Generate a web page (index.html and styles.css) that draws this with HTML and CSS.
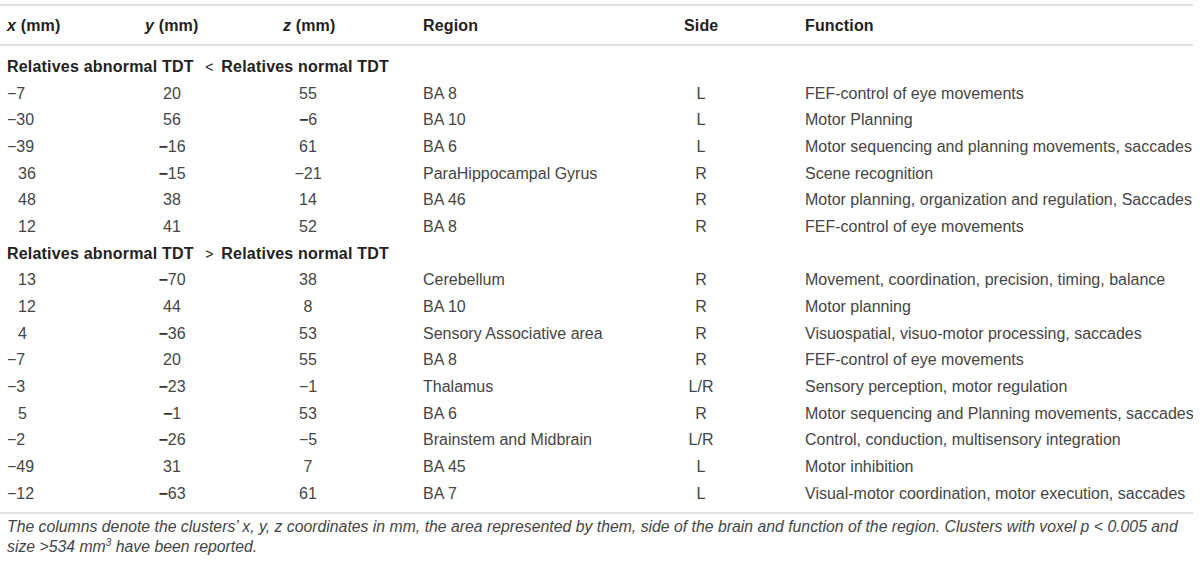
FILE: index.html
```html
<!DOCTYPE html>
<html lang="en">
<head>
<meta charset="utf-8">
<title>Clusters table</title>
<link rel="stylesheet" href="styles.css">
</head>
<body>
<table class="data">
  <colgroup>
    <col class="c1"><col class="c2"><col class="c3"><col class="c4"><col class="c5"><col class="c6">
  </colgroup>
  <thead>
    <tr>
      <th><i>x</i> (mm)</th>
      <th><i>y</i> (mm)</th>
      <th><i>z</i> (mm)</th>
      <th>Region</th>
      <th>Side</th>
      <th>Function</th>
    </tr>
  </thead>
  <tbody>
    <tr class="group first"><td colspan="6">Relatives abnormal TDT <span class="op">&lt;</span> Relatives normal TDT</td></tr>
    <tr><td>&minus;7</td><td><span class="cy">20</span></td><td><span class="cz">55</span></td><td>BA 8</td><td><span class="cs">L</span></td><td>FEF-control of eye movements</td></tr>
    <tr><td>&minus;30</td><td><span class="cy">56</span></td><td><span class="cz"><b class="m">&minus;</b>6</span></td><td>BA 10</td><td><span class="cs">L</span></td><td>Motor Planning</td></tr>
    <tr><td>&minus;39</td><td><span class="cy"><b class="m">&minus;</b>16</span></td><td><span class="cz">61</span></td><td>BA 6</td><td><span class="cs">L</span></td><td>Motor sequencing and planning movements, saccades</td></tr>
    <tr><td class="pos">36</td><td><span class="cy"><b class="m">&minus;</b>15</span></td><td><span class="cz">&minus;21</span></td><td>ParaHippocampal Gyrus</td><td><span class="cs">R</span></td><td>Scene recognition</td></tr>
    <tr><td class="pos">48</td><td><span class="cy">38</span></td><td><span class="cz">14</span></td><td>BA 46</td><td><span class="cs">R</span></td><td>Motor planning, organization and regulation, Saccades</td></tr>
    <tr><td class="pos">12</td><td><span class="cy">41</span></td><td><span class="cz">52</span></td><td>BA 8</td><td><span class="cs">R</span></td><td>FEF-control of eye movements</td></tr>
    <tr class="group"><td colspan="6">Relatives abnormal TDT <span class="op">&gt;</span> Relatives normal TDT</td></tr>
    <tr><td class="pos">13</td><td><span class="cy"><b class="m">&minus;</b>70</span></td><td><span class="cz">38</span></td><td>Cerebellum</td><td><span class="cs">R</span></td><td>Movement, coordination, precision, timing, balance</td></tr>
    <tr><td class="pos">12</td><td><span class="cy">44</span></td><td><span class="cz">8</span></td><td>BA 10</td><td><span class="cs">R</span></td><td>Motor planning</td></tr>
    <tr><td class="pos">4</td><td><span class="cy"><b class="m">&minus;</b>36</span></td><td><span class="cz">53</span></td><td>Sensory Associative area</td><td><span class="cs">R</span></td><td>Visuospatial, visuo-motor processing, saccades</td></tr>
    <tr><td>&minus;7</td><td><span class="cy">20</span></td><td><span class="cz">55</span></td><td>BA 8</td><td><span class="cs">R</span></td><td>FEF-control of eye movements</td></tr>
    <tr><td>&minus;3</td><td><span class="cy"><b class="m">&minus;</b>23</span></td><td><span class="cz">&minus;1</span></td><td>Thalamus</td><td><span class="cs">L/R</span></td><td>Sensory perception, motor regulation</td></tr>
    <tr><td class="pos">5</td><td><span class="cy"><b class="m">&minus;</b>1</span></td><td><span class="cz">53</span></td><td>BA 6</td><td><span class="cs">R</span></td><td>Motor sequencing and Planning movements, saccades</td></tr>
    <tr><td>&minus;2</td><td><span class="cy"><b class="m">&minus;</b>26</span></td><td><span class="cz">&minus;5</span></td><td>Brainstem and Midbrain</td><td><span class="cs">L/R</span></td><td>Control, conduction, multisensory integration</td></tr>
    <tr><td>&minus;49</td><td><span class="cy">31</span></td><td><span class="cz">7</span></td><td>BA 45</td><td><span class="cs">L</span></td><td>Motor inhibition</td></tr>
    <tr class="last"><td>&minus;12</td><td><span class="cy"><b class="m">&minus;</b>63</span></td><td><span class="cz">61</span></td><td>BA 7</td><td><span class="cs">L</span></td><td>Visual-motor coordination, motor execution, saccades</td></tr>
  </tbody>
</table>
<p class="caption">The columns denote the clusters&rsquo; x, y, z coordinates in mm, the area represented by them, side of the brain and function of the region. Clusters with voxel <span class="p">p</span> &lt; 0.005 and size &gt;534 mm<sup>3</sup> have been reported.</p>
</body>
</html>
```

FILE: styles.css
```css
html, body {
  margin: 0;
  padding: 0;
  background: #ffffff;
}

body {
  font-family: "Liberation Sans", Arial, sans-serif;
  color: #454545;
  width: 1193px;
}

.data {
  border-collapse: collapse;
  table-layout: fixed;
  width: 1193px;
  margin-top: 4px;
  border-top: 2px solid #e2e2e2;
  border-bottom: 2px solid #e2e2e2;
  font-size: 16px;
}

.c1 { width: 138px; }
.c2 { width: 138px; }
.c3 { width: 140px; }
.c4 { width: 261px; }
.c5 { width: 121px; }
.c6 { width: 395px; }

.data th {
  text-align: left;
  font-weight: bold;
  color: #222222;
  padding: 2px 0 0 7px;
  height: 36px;
  line-height: 36px;
  border-bottom: 2px solid #e2e2e2;
  letter-spacing: 0.15px;
}

.data td {
  padding: 0 0 0 7px;
  line-height: 26.67px;
  height: 26.67px;
  white-space: nowrap;
  vertical-align: middle;
}

.data tr.group td {
  font-weight: bold;
  color: #222222;
  letter-spacing: 0.2px;
}

.data tr.group.first td {
  padding-top: 8px;
}

.data tr.last td {
  padding-bottom: 5px;
}

.op {
  font-weight: normal;
  font-size: 14px;
  margin: 0 3px 0 7px;
}

.data td.pos {
  padding-left: 18px;
}

.cy, .cz, .cs {
  display: inline-block;
  text-align: center;
}

.cy { width: 54px; }
.cz { width: 50px; }
.cs { width: 34px; }

.m {
  font-weight: bold;
  color: #333333;
}

.caption {
  margin: 0;
  width: 1200px;
  box-sizing: border-box;
  padding: 3px 0 0 7px;
  font-size: 15.8px;
  font-style: italic;
  line-height: 20px;
  color: #454545;
}

.caption sup {
  font-size: 10px;
  line-height: 0;
  vertical-align: 6px;
}
```
